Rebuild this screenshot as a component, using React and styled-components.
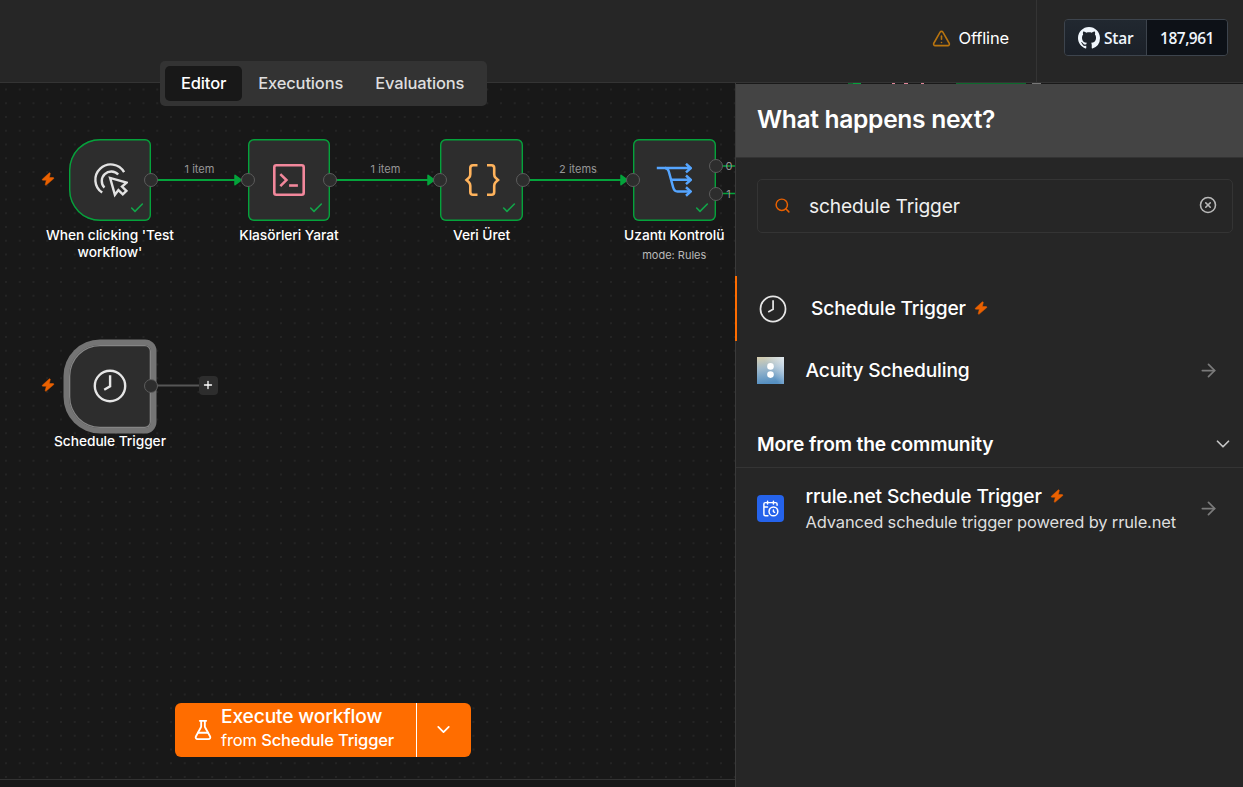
import * as React from "react";
import styled, { createGlobalStyle, css } from "styled-components";

import {
  ArrowRight,
  Check,
  ChevronDown,
  CircleX,
  FlaskConical,
  Plus,
  Search,
  TriangleAlert
} from "lucide-react";

const App = () => {
  return (
    <Page>
      <GlobalStyle />

      <Header>
        <Offline>
          <TriangleAlert size={19} color="#b8740f" strokeWidth={2} />
          <span>Offline</span>
        </Offline>
        <GithubArea>
          <StarButton>
            <StarLabel>
              <GithubMark />
              Star
            </StarLabel>
            <StarCount>187,961</StarCount>
          </StarButton>
        </GithubArea>
        <Tabs>
          <Tab $active>Editor</Tab>
          <Tab>Executions</Tab>
          <Tab>Evaluations</Tab>
        </Tabs>
      </Header>

      <Main>
        <Canvas>
          <Edges />

          <WorkflowNode
            x={68.7}
            y={55.6}
            trigger
            done
            label={["When clicking 'Test", "workflow'"]}
            outputs={[41]}
          >
            <ClickIcon />
          </WorkflowNode>
          <WorkflowNode
            x={247.7}
            y={55.6}
            done
            label={["Klasörleri Yarat"]}
            input
            outputs={[41]}
          >
            <TerminalIcon />
          </WorkflowNode>
          <WorkflowNode
            x={440.3}
            y={55.6}
            done
            label={["Veri Üret"]}
            input
            outputs={[41]}
          >
            <BracesIcon />
          </WorkflowNode>
          <WorkflowNode
            x={633}
            y={55.6}
            done
            label={["Uzantı Kontrolü"]}
            subtitle="mode: Rules"
            input
            outputs={[27, 55]}
          >
            <SwitchIcon />
          </WorkflowNode>
          <WorkflowNode
            x={68.7}
            y={262}
            trigger
            selected
            label={["Schedule Trigger"]}
            outputs={[41]}
          >
            <ClockIcon size={34} strokeWidth={2.4} />
          </WorkflowNode>

          <EdgeLabel $x={199.5} $y={86}>1 item</EdgeLabel>
          <EdgeLabel $x={385.5} $y={86}>1 item</EdgeLabel>
          <EdgeLabel $x={578} $y={86}>2 items</EdgeLabel>
          <EdgeLabel $x={729} $y={83}>0</EdgeLabel>
          <EdgeLabel $x={728.5} $y={110.5}>1</EdgeLabel>

          <AddButton>
            <Plus size={12} strokeWidth={2.6} />
          </AddButton>

          <Execute>
            <ExecuteMain>
              <FlaskConical size={22} strokeWidth={2} />
              <ExecuteText>
                <ExecuteTitle>Execute workflow</ExecuteTitle>
                <ExecuteSource>
                  from <b>Schedule Trigger</b>
                </ExecuteSource>
              </ExecuteText>
            </ExecuteMain>
            <ExecuteMenu>
              <ChevronDown size={21} strokeWidth={2} />
            </ExecuteMenu>
          </Execute>

          <LogsBar />
        </Canvas>

        <Creator>
          <HiddenNodes />
          <CreatorHeader>What happens next?</CreatorHeader>
          <SearchBox>
            <Search size={17} color="#ea6100" strokeWidth={2.1} />
            <SearchInput defaultValue="schedule Trigger" />
            <CircleX size={18} color="#b9b9b9" strokeWidth={2.1} />
          </SearchBox>

          <Result $active>
            <ResultIcon $wide>
              <ClockIcon size={28} strokeWidth={2.1} />
            </ResultIcon>
            <ResultName>
              Schedule Trigger <Bolt size={14} />
            </ResultName>
          </Result>
          <Result>
            <ResultIcon>
              <AcuityIcon />
            </ResultIcon>
            <ResultName>Acuity Scheduling</ResultName>
            <ArrowRight size={21} color="#7a7a7a" strokeWidth={2} />
          </Result>

          <SectionHeader>
            More from the community
            <ChevronDown size={22} color="#c4c4c4" strokeWidth={1.9} />
          </SectionHeader>

          <Result $tall>
            <ResultIcon>
              <CalendarIcon />
            </ResultIcon>
            <ResultText>
              <ResultName>
                rrule.net Schedule Trigger <Bolt size={14} />
              </ResultName>
              <ResultDescription>
                Advanced schedule trigger powered by rrule.net
              </ResultDescription>
            </ResultText>
            <ArrowRight size={21} color="#7a7a7a" strokeWidth={2} />
          </Result>
        </Creator>
      </Main>
    </Page>
  );
};

const WorkflowNode = props => {
  return (
    <NodeWrapper $x={props.x} $y={props.y}>
      {props.trigger && (
        <TriggerMark>
          <Bolt size={14} />
        </TriggerMark>
      )}
      <NodeBox $trigger={props.trigger} $selected={props.selected}>
        {props.children}
        {props.done && (
          <DoneMark>
            <Check size={16} strokeWidth={2.4} />
          </DoneMark>
        )}
        {props.input && <Handle $x={0} $y={41} />}
        {props.outputs.map(y => (
          <Handle key={y} $x={82.5} $y={y} />
        ))}
      </NodeBox>
      <NodeLabel>
        {props.label.map(line => (
          <div key={line}>{line}</div>
        ))}
      </NodeLabel>
      {props.subtitle && <NodeSubtitle>{props.subtitle}</NodeSubtitle>}
    </NodeWrapper>
  );
};

const Edges = () => (
  <EdgeLayer width="735" height="696" viewBox="0 0 735 696" fill="none">
    <g stroke="#04a33b" strokeWidth="2">
      <path d="M152 97H237M331 97H430M523 97H623" />
      <path d="M716 83H735M716 110.5H735" strokeWidth="1.4" />
    </g>
    <g fill="#04a33b" stroke="#04a33b" strokeWidth="1.5" strokeLinejoin="round">
      <path d="M235 92.3L241.5 97L235 101.7Z" />
      <path d="M428 92.3L434.5 97L428 101.7Z" />
      <path d="M621 92.3L627.5 97L621 101.7Z" />
    </g>
    <path d="M152 302.5H200" stroke="#565656" strokeWidth="1.8" />
  </EdgeLayer>
);

const GithubMark = () => (
  <svg width="22" height="22" viewBox="0 0 16 16" fill="currentColor">
    <path d="M8 0C3.58 0 0 3.58 0 8c0 3.54 2.29 6.53 5.47 7.59.4.07.55-.17.55-.38 0-.19-.01-.82-.01-1.49-2.01.37-2.53-.49-2.69-.94-.09-.23-.48-.94-.82-1.13-.28-.15-.68-.52-.01-.53.63-.01 1.08.58 1.23.82.72 1.21 1.87.87 2.33.66.07-.52.28-.87.51-1.07-1.78-.2-3.64-.89-3.64-3.95 0-.87.31-1.59.82-2.15-.08-.2-.36-1.02.08-2.12 0 0 .67-.21 2.2.82.64-.18 1.32-.27 2-.27.68 0 1.36.09 2 .27 1.53-1.04 2.2-.82 2.2-.82.44 1.1.16 1.92.08 2.12.51.56.82 1.27.82 2.15 0 3.07-1.87 3.75-3.65 3.95.29.25.54.73.54 1.48 0 1.07-.01 1.93-.01 2.2 0 .21.15.46.55.38A8.013 8.013 0 0 0 16 8c0-4.42-3.58-8-8-8z" />
  </svg>
);

const Bolt = ({ size }) => (
  <svg width={size} height={size} viewBox="0 0 14 14">
    <path
      d="M8.2 0.9L1.3 7.2Q1 8 1.7 8.2H5.3L4.2 12.8Q4.5 13.6 5.2 13.1L12.8 6.6Q13.1 5.8 12.3 5.6H8.3L9.3 1.4Q9 0.4 8.2 0.9Z"
      fill="#ea6100"
      stroke="#ea6100"
      strokeWidth="0.5"
    />
  </svg>
);

const ClickIcon = () => (
  <svg
    width="36"
    height="36"
    viewBox="0 0 36 36"
    fill="none"
    stroke="#e2e2e2"
    strokeWidth="2.4"
  >
    <path d="M10.2 30.6A15.4 15.4 0 1 1 32.1 10.1" />
    <path d="M12.4 25.6A9.1 9.1 0 1 1 26.2 12.5" />
    <path d="M18.1 15.9L22.9 32.8L26.4 28.1L30.8 32.4L34.4 28.9L30 24.5L34.5 20.6Z" />
  </svg>
);

const TerminalIcon = () => (
  <svg width="34" height="34" viewBox="0 0 34 34" fill="none" stroke="#f2879b" strokeWidth="2.6">
    <rect x="2.3" y="2.3" width="29.4" height="29.4" rx="2" />
    <path d="M8.3 11.1L14.4 17.1L8.3 23.1" />
    <path d="M17.1 22.5H25.9" />
  </svg>
);

const BracesIcon = () => (
  <svg width="36" height="34" viewBox="0 0 36 34" fill="none" stroke="#ffb35c" strokeWidth="2.6">
    <path d="M13.5 2.2H9Q6.3 2.2 6.3 5V11.3Q6.3 13.3 5 14.7L2.5 17L5 19.3Q6.3 20.7 6.3 22.7V29Q6.3 31.8 9 31.8H13.5" />
    <path d="M23 2.2H27.5Q30.2 2.2 30.2 5V11.3Q30.2 13.3 31.5 14.7L34 17L31.5 19.3Q30.2 20.7 30.2 22.7V29Q30.2 31.8 27.5 31.8H23" />
  </svg>
);

const SwitchIcon = () => (
  <svg width="36" height="34" viewBox="0 0 36 34" fill="none" stroke="#55a5ff" strokeWidth="2.5">
    <path d="M0.8 5.1H35M30 0.8L34.8 5.1L30 9.4" />
    <path d="M9 5.1Q11.8 5.2 12.8 8.5L17.2 24.5Q18.3 28.5 21.5 28.5H35" />
    <path d="M14.5 16.8H35M30 12.5L34.8 16.8L30 21.1" />
    <path d="M30 24.2L34.8 28.5L30 32.8" />
  </svg>
);

const ClockIcon = ({ size, strokeWidth }) => (
  <svg
    width={size}
    height={size}
    viewBox="0 0 34 34"
    fill="none"
    stroke="#e6e6e6"
    strokeWidth={strokeWidth}
  >
    <circle cx="17" cy="17" r="15.2" />
    <path d="M17.1 6.3V17.4L11.2 20.7" />
  </svg>
);

const AcuityIcon = () => (
  <svg width="27" height="27" viewBox="0 0 27 27">
    <defs>
      <linearGradient id="sky" x1="0" y1="0" x2="0.15" y2="1">
        <stop offset="0" stopColor="#d8cfae" />
        <stop offset="0.45" stopColor="#9fb9cb" />
        <stop offset="1" stopColor="#5690c2" />
      </linearGradient>
      <linearGradient id="haze" x1="0" y1="0.6" x2="1" y2="0">
        <stop offset="0.4" stopColor="#dbe7f2" stopOpacity="0" />
        <stop offset="1" stopColor="#e6effa" stopOpacity="0.85" />
      </linearGradient>
    </defs>
    <rect width="27" height="27" fill="url(#sky)" />
    <rect width="27" height="27" fill="url(#haze)" />
    <circle cx="13.5" cy="9.4" r="3.3" fill="#fff" />
    <circle cx="13.5" cy="17.6" r="3.3" fill="#fff" />
  </svg>
);

const CalendarIcon = () => (
  <svg width="27" height="27" viewBox="0 0 27 27">
    <rect width="27" height="27" rx="4" fill="#2563eb" />
    <g
      transform="translate(4.7 4.7) scale(0.733)"
      fill="none"
      stroke="#fff"
      strokeWidth="2"
      strokeLinecap="round"
      strokeLinejoin="round"
    >
      <path d="M21 7.5V6a2 2 0 0 0-2-2H5a2 2 0 0 0-2 2v14a2 2 0 0 0 2 2h3.5M16 2v4M8 2v4M3 10h5" />
      <path d="M16 14v2.2l1.6 1" />
      <circle cx="16" cy="16" r="6" />
    </g>
  </svg>
);

// Top pixels of the nodes that sit underneath the creator panel
const HiddenNodes = () => (
  <svg width="507" height="1" viewBox="0 0 507 1">
    <rect width="507" height="1" fill="#191919" />
    <path d="M112 0.5H125M220 0.5H290" stroke="#0c6a2c" />
    <path d="M117 0.5H125" stroke="#04a33b" />
    <path d="M156 0.5H159M168 0.5H172M185 0.5H188" stroke="#e08598" />
    <path d="M296 0.5H305" stroke="#777" />
  </svg>
);

const GlobalStyle = createGlobalStyle`
  * {
    box-sizing: border-box;
  }

  body {
    margin: 0;
    overflow: hidden;
    background: #181818;
    color: #fff;
    font-family: Inter, "Liberation Sans", sans-serif;
  }

  svg {
    display: block;
    flex: none;
  }
`;

const Page = styled.div`
  display: flex;
  flex-direction: column;
  height: 787px;
`;

const Header = styled.header`
  position: relative;
  z-index: 2;
  display: flex;
  justify-content: flex-end;
  height: 83px;
  background: #262626;
  border-bottom: 1px solid #343434;
`;

const Offline = styled.div`
  display: flex;
  align-items: center;
  gap: 8px;
  padding: 0 27px 6px 0;
  font-size: 16.5px;
  letter-spacing: -0.15px;
`;

const GithubArea = styled.div`
  width: 207px;
  padding: 19px 15px 0 27px;
  border-left: 1px solid #343434;
`;

const StarButton = styled.div`
  display: flex;
  height: 37px;
  border: 1px solid #3d444d;
  border-radius: 4px;
  overflow: hidden;
  color: #f0f6fc;
  font: 600 15.5px "Open Sans", "Noto Sans", sans-serif;
  letter-spacing: -0.2px;
`;

const StarLabel = styled.div`
  display: flex;
  align-items: center;
  gap: 4px;
  width: 82px;
  padding-left: 13px;
  background: linear-gradient(#212830, #1b2028);
  border-right: 1px solid #3d444d;
`;

const StarCount = styled.div`
  display: flex;
  flex: 1;
  align-items: center;
  justify-content: center;
  background: #0d1117;
  letter-spacing: -0.5px;
`;

const Tabs = styled.nav`
  position: absolute;
  top: 61px;
  left: 160px;
  display: flex;
  width: 327px;
  height: 45px;
  padding: 5px;
  background: #333;
  border-radius: 5px;
`;

const Tab = styled.div`
  display: flex;
  align-items: center;
  padding: 0 16px 2px;
  border-radius: 5px;
  font-size: 16.5px;
  font-weight: 500;
  letter-spacing: -0.15px;
  color: #dedede;

  ${props =>
    props.$active &&
    css`
      background: #181818;
      color: #fff;
    `}
`;

const Main = styled.main`
  display: flex;
  flex: 1;
`;

const Canvas = styled.div`
  position: relative;
  width: 735px;
  overflow: hidden;
  background: radial-gradient(circle at center, #303030 0.5px, transparent 0.9px);
  background-size: 13.76px 13.76px;
  background-position: -0.9px -0.4px;
`;

const EdgeLayer = styled.svg`
  position: absolute;
  top: 0;
  left: 0;
`;

const NodeWrapper = styled.div`
  position: absolute;
  left: ${props => props.$x}px;
  top: ${props => props.$y}px;
  width: 82.5px;
`;

const NodeBox = styled.div`
  position: relative;
  display: flex;
  align-items: center;
  justify-content: center;
  height: 82.5px;
  background: #2d2d2d;
  border-radius: ${props => (props.$trigger ? "31px 6px 6px 31px" : "6px")};
  box-shadow: ${props =>
    props.$selected
      ? "inset 0 0 0 1.3px #858585, 0 0 0 5.5px #747474"
      : "inset 0 0 0 1.4px #04a33b"};
`;

const TriggerMark = styled.div`
  position: absolute;
  left: -28px;
  top: 33px;
`;

const DoneMark = styled.div`
  position: absolute;
  right: 6px;
  bottom: 5px;
  color: #12a549;
`;

const Handle = styled.div`
  position: absolute;
  left: ${props => props.$x - 7}px;
  top: ${props => props.$y - 7}px;
  width: 14px;
  height: 14px;
  background: #2d2d2d;
  border: 1.3px solid #5c5c5c;
  border-radius: 50%;
`;

const NodeLabel = styled.div`
  margin: 5.5px -40px 0;
  text-align: center;
  font-size: 13.75px;
  font-weight: 500;
  line-height: 17px;
  letter-spacing: -0.05px;
  white-space: nowrap;
`;

const NodeSubtitle = styled.div`
  margin-top: 4px;
  text-align: center;
  font-size: 11px;
  line-height: 14px;
  color: #b8b8b8;
`;

const EdgeLabel = styled.div`
  position: absolute;
  left: ${props => props.$x}px;
  top: ${props => props.$y}px;
  transform: translate(-50%, -50%);
  padding: 0 1px;
  font-size: 11px;
  line-height: 13px;
  color: #969696;
  white-space: nowrap;
`;

const AddButton = styled.div`
  position: absolute;
  left: 199px;
  top: 293px;
  display: flex;
  align-items: center;
  justify-content: center;
  width: 19px;
  height: 19px;
  padding: 0 1px 1px 0;
  background: #2d2d2d;
  border-radius: 4px;
`;

const Execute = styled.div`
  position: absolute;
  left: 175px;
  top: 620px;
  display: flex;
  width: 296px;
  height: 54px;
  background: #ff6d00;
  border-radius: 6px;
`;

const ExecuteMain = styled.div`
  display: flex;
  align-items: center;
  gap: 7px;
  width: 242px;
  padding-left: 17px;
  border-right: 1px solid #fff;
`;

const ExecuteText = styled.div`
  padding-bottom: 4px;
  white-space: nowrap;
`;

const ExecuteTitle = styled.div`
  font-size: 19.2px;
  font-weight: 500;
  line-height: 24px;
  letter-spacing: -0.14px;
`;

const ExecuteSource = styled.div`
  font-size: 16.5px;
  line-height: 24px;
  letter-spacing: -0.16px;

  b {
    font-weight: 500;
  }
`;

const ExecuteMenu = styled.div`
  display: flex;
  flex: 1;
  align-items: center;
  justify-content: center;
  padding: 0 1px 1px 0;
`;

const LogsBar = styled.div`
  position: absolute;
  left: 0;
  right: 0;
  bottom: 0;
  height: 8px;
  background: #181818;
  border-top: 1px solid #333;
`;

const Creator = styled.aside`
  display: flex;
  flex-direction: column;
  width: 508px;
  background: #262626;
  border-left: 1px solid #3a3a3a;
`;

const CreatorHeader = styled.div`
  height: 74px;
  padding: 20px 21px;
  background: #444;
  border-bottom: 1px solid #333;
  font-size: 24.6px;
  font-weight: 600;
  line-height: 30px;
  letter-spacing: -0.32px;
`;

const SearchBox = styled.div`
  display: flex;
  align-items: center;
  height: 54px;
  margin: 21px 10px 43px 21px;
  padding: 0 15px 2px 16px;
  border: 1px solid #343434;
  border-radius: 5px;
`;

const SearchInput = styled.input`
  flex: 1;
  min-width: 0;
  height: 30px;
  margin: 2px 12px 0 18px;
  padding: 0;
  background: none;
  border: 0;
  outline: 0;
  color: #f0f0f0;
  font: 400 19.2px Inter, sans-serif;
  letter-spacing: -0.16px;
`;

const Result = styled.div`
  display: flex;
  align-items: center;
  height: ${props => (props.$tall ? 81 : props.$active ? 65 : 59)}px;
  padding: 0 24px 0 21px;

  ${props =>
    props.$active &&
    css`
      margin-left: -1px;
      padding-left: 22px;
      box-shadow: inset 2px 0 #ff6d00;
    `}
`;

const ResultIcon = styled.div`
  width: ${props => (props.$wide ? 54 : 48.5)}px;
  padding-left: ${props => (props.$wide ? 2 : 0)}px;
`;

const ResultText = styled.div`
  flex: 1;
`;

const ResultName = styled.div`
  display: flex;
  flex: 1;
  align-items: center;
  gap: 8px;
  padding-bottom: 1px;
  font-size: 19.2px;
  font-weight: 500;
  line-height: 25px;
  letter-spacing: -0.16px;
`;

const ResultDescription = styled.div`
  font-size: 16.5px;
  line-height: 24px;
  letter-spacing: -0.16px;
  color: #dedede;
`;

const SectionHeader = styled.div`
  display: flex;
  align-items: center;
  justify-content: space-between;
  height: 48px;
  margin-top: 20px;
  padding: 0 9px 0 21px;
  border-bottom: 1px solid #343434;
  font-size: 19.2px;
  font-weight: 600;
  letter-spacing: -0.17px;
`;

export default App;
